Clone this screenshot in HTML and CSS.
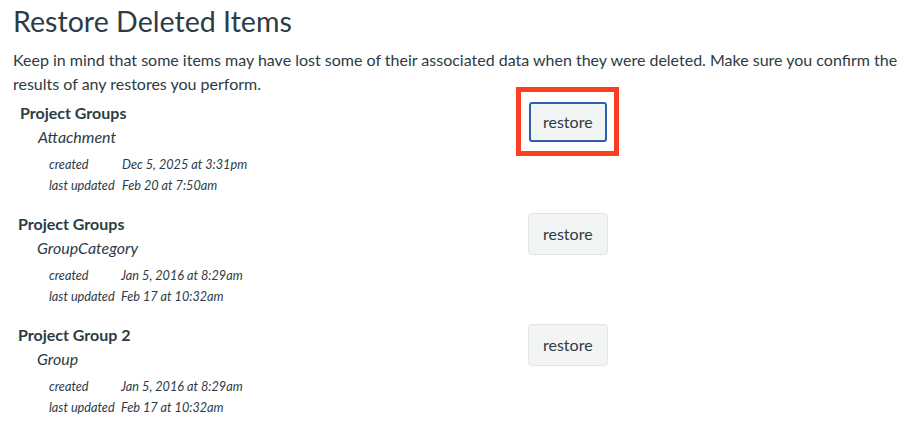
FILE: index.html
```html
<!DOCTYPE html>
<html lang="en">
<head>
<meta charset="utf-8">
<title>Restore Deleted Items</title>
<link rel="stylesheet" href="styles.css">
</head>
<body>
<main class="page">
  <h1 class="title">Restore Deleted Items</h1>
  <p class="intro">Keep in mind that some items may have lost some of their associated data when they were deleted. Make sure you confirm the results of any restores you perform.</p>

  <section class="item item--first">
    <div class="info">
      <div class="name">Project Groups</div>
      <div class="type">Attachment</div>
      <dl class="dates">
        <dt>created</dt><dd>Dec 5, 2025 at 3:31pm</dd>
        <dt>last updated</dt><dd>Feb 20 at 7:50am</dd>
      </dl>
    </div>
    <div class="action">
      <button class="btn btn--focused" type="button">restore<span class="highlight"></span></button>
    </div>
  </section>

  <section class="item">
    <div class="info">
      <div class="name">Project Groups</div>
      <div class="type">GroupCategory</div>
      <dl class="dates">
        <dt>created</dt><dd>Jan 5, 2016 at 8:29am</dd>
        <dt>last updated</dt><dd>Feb 17 at 10:32am</dd>
      </dl>
    </div>
    <div class="action">
      <button class="btn" type="button">restore</button>
    </div>
  </section>

  <section class="item">
    <div class="info">
      <div class="name">Project Group 2</div>
      <div class="type">Group</div>
      <dl class="dates">
        <dt>created</dt><dd>Jan 5, 2016 at 8:29am</dd>
        <dt>last updated</dt><dd>Feb 17 at 10:32am</dd>
      </dl>
    </div>
    <div class="action">
      <button class="btn" type="button">restore</button>
    </div>
  </section>
</main>
</body>
</html>
```

FILE: styles.css
```css
* { box-sizing: border-box; }

html, body {
  margin: 0;
  padding: 0;
  background: #ffffff;
}

body {
  font-family: Lato, "Noto Sans", "Liberation Sans", sans-serif;
  color: #2d3b45;
}

.page {
  padding: 0 12px 0 13px;
}

.title {
  margin: 4px 0 0 0;
  font-size: 28.6px;
  line-height: 35px;
  font-weight: 400;
}

.intro {
  margin: 9px 0 0 0;
  font-size: 16px;
  line-height: 24px;
}

.item {
  display: grid;
  grid-template-columns: 510px auto;
  align-items: start;
  padding-left: 5px;
  margin-top: 16px;
}

.item--first {
  margin-top: 5px;
  grid-template-columns: 509px auto;
  padding-left: 7px;
}

.name {
  font-size: 16px;
  line-height: 24px;
  font-weight: 700;
}

.type {
  font-size: 16px;
  line-height: 24px;
  font-style: italic;
  margin-left: 19px;
}

.item--first .type {
  margin-left: 18px;
}

.dates {
  display: grid;
  grid-template-columns: 72px auto;
  margin: 5px 0 0 31px;
  font-size: 12.7px;
  line-height: 21px;
  font-style: italic;
}

.item--first .dates {
  grid-template-columns: 73px auto;
  margin-left: 29px;
}

.dates dt, .dates dd {
  margin: 0;
}

.action {
  padding-top: 1px;
}

.btn {
  position: relative;
  height: 42px;
  padding: 0 14px;
  font-family: inherit;
  font-size: 16px;
  line-height: 24px;
  color: #2d3b45;
  background: #f3f4f4;
  border: 1px solid #e1e4e6;
  border-radius: 4px;
}

.btn--focused {
  height: 40px;
  padding: 0 12px;
  border: 2px solid #2a61ad;
  border-radius: 3px;
}

.highlight {
  position: absolute;
  top: -17px;
  left: -15px;
  right: -14px;
  bottom: -16px;
  border: 5px solid #fa3e20;
  pointer-events: none;
}
```
